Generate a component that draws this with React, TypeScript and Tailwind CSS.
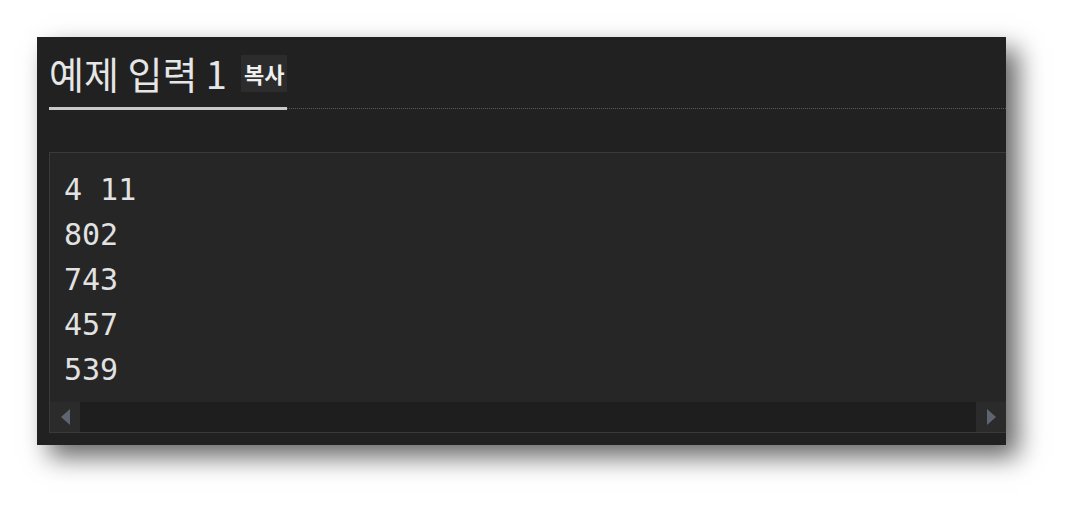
import React from 'react'

const lines = ['4 11', '802', '743', '457', '539']

function ScrollArrow({ dir }: { dir: 'left' | 'right' }) {
  return (
    <div className="flex h-full w-[30px] shrink-0 items-center justify-center bg-[#2b2b2b]">
      <svg width="11" height="18" viewBox="0 0 11 18">
        {dir === 'left' ? (
          <polygon points="10,1 1,9 10,17" fill="#5d6670" />
        ) : (
          <polygon points="1,1 10,9 1,17" fill="#5d6670" />
        )}
      </svg>
    </div>
  )
}

export default function App() {
  return (
    <div className="min-h-[516px] w-[1076px] bg-white pl-[37px] pt-[37px]">
      <div className="flex h-[408px] w-[969px] flex-col overflow-hidden bg-[#212121] pb-[12px] pl-[12px] shadow-[12px_12px_24px_rgba(0,0,0,0.6)]">
        {/* header with tab underline */}
        <div className="flex items-end pt-[14px]">
          <div className="flex items-center gap-[14px] border-b-[3px] border-[#c9c9c9] pb-[12px]">
            <h1 className="text-[38px] leading-[44px] text-[#e6e6e6] [font-family:'Noto_Sans_CJK_KR',sans-serif]">
              예제 입력 1
            </h1>
            <button className="h-[37px] bg-[#2c2c2c] px-[3px] text-[22px] font-bold leading-[37px] text-[#f0f0f0] [font-family:'Noto_Sans_CJK_KR',sans-serif]">
              복사
            </button>
          </div>
          <div className="mb-[1px] flex-1 border-b border-dotted border-[#5a5a5a]" />
        </div>

        {/* sample box */}
        <div className="mt-[42px] flex flex-1 flex-col border border-r-0 border-[#3a3a3a] bg-[#262626]">
          <pre className="flex-1 pl-[14px] pt-[14px] text-[30px] leading-[45px] text-[#e2e2e2] [font-family:'DejaVu_Sans_Mono',monospace]">
            {lines.join('\n')}
          </pre>
          <div className="flex h-[30px] bg-[#1e1e1e]">
            <ScrollArrow dir="left" />
            <div className="flex-1" />
            <ScrollArrow dir="right" />
          </div>
        </div>
      </div>
    </div>
  )
}
